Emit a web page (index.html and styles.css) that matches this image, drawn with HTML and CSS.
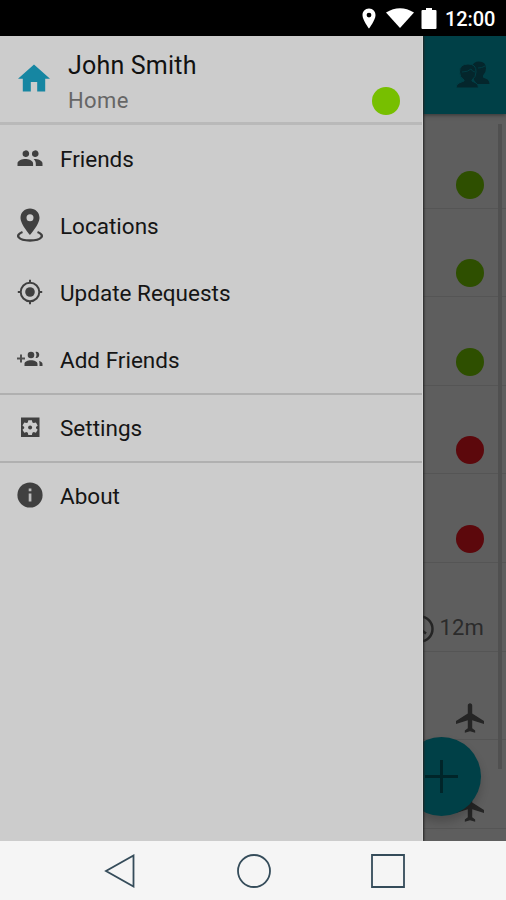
FILE: index.html
```html
<!DOCTYPE html>
<html lang="en">
<head>
<meta charset="utf-8">
<title>Friends</title>
<link rel="stylesheet" href="styles.css">
</head>
<body>
<div class="phone">
  <header class="status">
    <svg class="pin" viewBox="0 0 14 20"><path fill="#fff" fill-rule="evenodd" d="M7 0C3 0 .5 3 .5 6.700.5 11.500 7 20 7 20s6.500-8.500 6.500-13.300C13.500 3 11 0 7 0zm0 4.200a2.400 2.400 0 1 1 0 4.800 2.400 2.400 0 0 1 0-4.800z"/></svg>
    <svg class="wifi" viewBox="0 0 28 20"><path fill="#fff" d="M0 4.500Q14-4 28 4.500L14 20z"/></svg>
    <svg class="battery" viewBox="0 0 16 21"><path fill="#fff" d="M5 0h6v2h3.500q1 0 1 1v17q0 1-1 1h-13q-1 0-1-1V3q0-1 1-1H5z"/></svg>
    <span class="clock">12:00</span>
  </header>
  <main class="screen">
    <div class="toolbar">
      <svg class="people" viewBox="0 0 34 27"><g fill="#04262c"><path d="M16 6Q17 .5 23 .5q7 0 7 7 0 4-3 7v2l4.500 2q2 1.500 2 4.500H21l-3-4z"/><path stroke="#004047" d="M3.500 11q0-8 8.500-8t8 8q0 5-4 8v1l4 2q2.500 1.500 2.500 5H0q0-3.500 3-5l5-2v-1q-4.500-3-4.500-8z"/></g><path fill="none" stroke="#013c43" d="M6 11q6 0 9-3 1 2.500 4 3M22 7q4 0 7-2"/></svg>
    </div>
    <div class="list">
      <div class="row"><span class="dot green"></span></div>
      <div class="row"><span class="dot green"></span></div>
      <div class="row"><span class="dot green"></span></div>
      <div class="row"><span class="dot red"></span></div>
      <div class="row"><span class="dot red"></span></div>
      <div class="row"><svg class="time-icon" viewBox="0 0 28 28"><g fill="none" stroke="#252525" stroke-width="2.500"><circle cx="14" cy="14" r="12.500"/><path d="M14 6v8l6 4.500"/></g></svg><span class="time">12m</span></div>
      <div class="row"><svg class="plane" viewBox="2 2 19 20"><path fill="#252525" d="M21 16v-2l-8-5V3.500c0-.83-.67-1.500-1.500-1.500S10 2.670 10 3.500V9l-8 5v2l8-2.500V19l-2 1.500V22l3.500-1 3.500 1v-1.500L13 19v-5.500l8 2.500z"/></svg></div>
      <div class="row"><svg class="plane" viewBox="2 2 19 20"><path fill="#252525" d="M21 16v-2l-8-5V3.500c0-.83-.67-1.500-1.500-1.500S10 2.670 10 3.500V9l-8 5v2l8-2.500V19l-2 1.500V22l3.500-1 3.500 1v-1.500L13 19v-5.500l8 2.500z"/></svg></div>
    </div>
    <div class="scrollbar"></div>
    <div class="fab"><svg viewBox="0 0 34 34"><path d="M17 0v34M0 17h34" stroke="#002529" stroke-width="3"/></svg></div>
    <aside class="drawer">
      <div class="profile">
        <svg class="house" viewBox="2 3 20 17"><path fill="#1686a2" d="M10 20v-6h4v6h5v-8h3L12 3 2 12h3v8z"/></svg>
        <div class="who"><span class="name">John Smith</span><span class="place">Home</span></div>
        <span class="dot online"></span>
      </div>
      <nav>
        <div class="item"><svg viewBox="0 0 26 26"><path fill="#404040" d="M17.700 11.900a3.300 3.300 0 1 0 0-6.500 3.300 3.300 0 0 0 0 6.500zm-9.400 0a3.300 3.300 0 1 0 0-6.500 3.300 3.300 0 0 0 0 6.500zm0 2.200C5.500 14.100.5 15.500.5 18.400V21h15.600v-2.600c0-2.900-5-4.300-7.800-4.300zm9.400 0-1.100.1c1.300 1 2.200 2.300 2.200 4.200V21h6.700v-2.600c0-2.900-5-4.300-7.800-4.300z"/></svg><span>Friends</span></div>
        <div class="item"><svg class="tall" viewBox="0 0 26 34"><path fill="#404040" fill-rule="evenodd" d="M13 .5c-5.400 0-9.500 4-9.500 9.300C3.500 16.500 13 27 13 27s9.500-10.500 9.500-17.200C22.500 4.500 18.400.5 13 .5zm0 5.700a3.500 3.500 0 1 1 0 7 3.500 3.500 0 0 1 0-7z"/><path fill="none" stroke="#404040" stroke-width="2.400" d="M5.500 24c-8 3-4.500 8.500 7.500 8.500s15.500-5.500 7.500-8.500"/></svg><span>Locations</span></div>
        <div class="item"><svg viewBox="0 0 26 26"><circle cx="13" cy="13" r="4.800" fill="#404040"/><g fill="none" stroke="#404040" stroke-width="2"><circle cx="13" cy="13" r="9.300"/><path d="M13 .8V4m0 18v3.200M.8 13H4m18 0h3.200"/></g></svg><span>Update Requests</span></div>
        <div class="item"><svg viewBox="0 0 26 26"><g fill="#404040"><circle cx="14" cy="9" r="3.300"/><path d="M7.500 20v-2c0-5 13-5 13 0v2zM18.500 6c5-1.300 5 7 0 6q2-3 0-6zM22 15q3.500 1 3.500 3v2h-3v-2q0-2-.5-3z"/></g><path d="M4 8.500v8M0 12.500h8" stroke="#505050" stroke-width="2"/></svg><span>Add Friends</span></div>
        <div class="item divided settings"><svg viewBox="0 0 26 26"><path fill="#404040" d="M4 3.500h18.500V23H4z"/><path fill="#ccc" d="m11.300 6.200h3.600l.5 2.200 1.300.7 2.200-.7 1.800 3-1.700 1.600v1.200l1.700 1.500-1.800 3-2.200-.7-1.300.8-.5 2.200h-3.600l-.5-2.200-1.300-.8-2.200.7-1.800-3 1.700-1.500V13l-1.700-1.600 1.800-3 2.200.7 1.300-.7z"/><circle cx="13.100" cy="13.500" r="2" fill="#404040"/></svg><span>Settings</span></div>
        <div class="item divided"><svg viewBox="0 0 26 26"><circle cx="13" cy="13" r="12.600" fill="#404040"/><path fill="#bbb" d="M11.700 6.500h2.700v2.700h-2.700zM11.700 11.500h2.700v8h-2.700z"/></svg><span>About</span></div>
      </nav>
    </aside>
  </main>
  <footer class="navbar">
    <svg viewBox="0 0 34 34"><path d="M30.500 1.500v31L3 17z"/></svg>
    <svg viewBox="0 0 34 34"><circle cx="17" cy="17" r="16"/></svg>
    <svg viewBox="0 0 34 34"><path d="M1 1h32v32H1z"/></svg>
  </footer>
</div>
</body>
</html>
```

FILE: styles.css
```css
* { box-sizing: border-box; }
body { margin: 0; font-family: Roboto, sans-serif; }
svg { display: block; flex: none; }
.phone { width: 506px; height: 900px; display: flex; flex-direction: column; overflow: hidden; background: #000; }
.status { height: 36px; flex: none; display: flex; align-items: center; justify-content: flex-end; padding-right: 11px; color: #fff; }
.pin { width: 14px; height: 21px; margin-right: 10px; }
.wifi { width: 28px; height: 20px; margin-right: 7px; }
.battery { width: 16px; height: 21px; margin-right: 8px; }
.clock { font-size: 20px; font-weight: 500; line-height: 36px; width: 50px; padding-top: 2px; white-space: nowrap; letter-spacing: -.1px; }
.screen { position: relative; height: 805px; flex: none; overflow: hidden; background: #5e5e5e; }
.toolbar { height: 78px; display: flex; justify-content: flex-end; padding: 25px 16px 0 0; background: #004047; box-shadow: 0 1px 4px #333; }
.people { width: 34px; height: 27px; }
.list { padding-top: 6px; }
.row { height: 88.600px; display: flex; align-items: flex-end; justify-content: flex-end; padding: 0 22px 9px 0; border-bottom: 1px solid #555; }
.dot { display: block; width: 28px; height: 28px; border-radius: 50%; }
.green { background: #2e4f00; }
.red { background: #5c080c; }
.time-icon { width: 28px; height: 28px; margin: 0 5px -1px 0; }
.time { font-size: 22px; line-height: 30px; color: #2b2b2b; letter-spacing: .2px; margin-bottom: -1px; }
.plane { width: 28px; height: 30px; margin-bottom: -3px; }
.scrollbar { position: absolute; right: 4px; top: 88px; width: 4px; height: 645px; background: #505050; }
.fab { position: absolute; left: 402px; top: 701px; width: 79px; height: 79px; border-radius: 50%; background: #004047; display: grid; place-items: center; box-shadow: 0 6px 10px rgba(0,0,0,.2); }
.fab svg { width: 33px; height: 33px; }
.drawer { position: absolute; left: 0; top: 0; width: 423px; height: 805px; background: #ccc; border-right: 1px solid #d5d5d5; box-shadow: 1px 0 2px #222; }
.profile { height: 89px; display: flex; padding-left: 18px; border-bottom: 3px solid #b9b9b9; }
.house { width: 32px; height: 28px; margin-top: 28px; }
.who { display: flex; flex-direction: column; margin-left: 18px; flex: 1; }
.name { font-size: 25px; line-height: 30px; margin-top: 15px; color: #111; letter-spacing: .2px; }
.place { font-size: 22px; line-height: 28px; margin-top: 6px; color: #666; letter-spacing: .4px; }
.online { background: #77bf00; margin: 51px 22px 0 0; }
.item { height: 67px; display: flex; align-items: center; gap: 17px; padding-left: 17px; color: #151515; font-size: 22.500px; letter-spacing: 0; }
.item svg { width: 26px; height: 26px; margin-bottom: 2px; }
.item .tall { height: 34px; }
.divided { height: 68px; border-top: 2px solid #b0b0b0; }
.divided span { padding-bottom: 1px; }
.navbar { flex: 1; background: #f5f5f5; display: flex; align-items: center; justify-content: center; gap: 100px; padding: 1px 0 0 1px; }
.navbar svg { width: 34px; height: 34px; fill: none; stroke: #354c5a; stroke-width: 1.800; }
```
